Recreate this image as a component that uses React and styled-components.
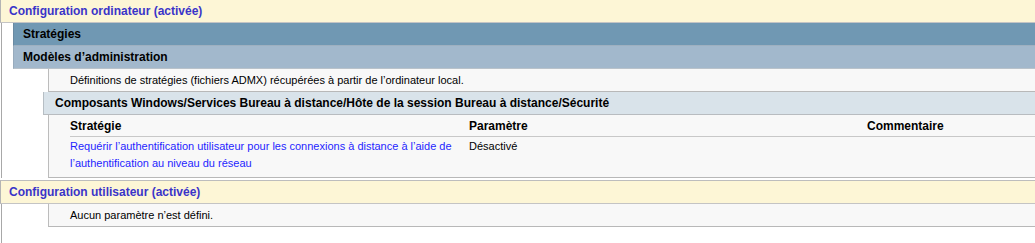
import React from 'react';
import styled, { createGlobalStyle } from 'styled-components';

const GlobalStyle = createGlobalStyle`
  html, body {
    margin: 0;
    padding: 0;
    background: #ffffff;
  }
  body {
    font-family: "Liberation Sans", Arial, sans-serif;
    font-size: 11px;
    color: #000000;
  }
`;

const COLUMNS = ['Stratégie', 'Paramètre', 'Commentaire'];

const POLICIES = [
  {
    name: 'Requérir l’authentification utilisateur pour les connexions à distance à l’aide de l’authentification au niveau du réseau',
    setting: 'Désactivé',
    comment: '',
  },
];

function Report() {
  return (
    <St.Page>
      <St.Section>
        <St.SectionHeader>Configuration ordinateur (activée)</St.SectionHeader>
        <St.SectionBody>
          <St.Band $tone="dark">Stratégies</St.Band>
          <St.Band $tone="light">Modèles d’administration</St.Band>
          <St.Note>Définitions de stratégies (fichiers ADMX) récupérées à partir de l’ordinateur local.</St.Note>
          <St.Category>
            Composants Windows/Services Bureau à distance/Hôte de la session Bureau à distance/Sécurité
          </St.Category>
          <St.Table>
            <St.HeadRow>
              {COLUMNS.map((col) => (
                <St.HeadCell key={col}>{col}</St.HeadCell>
              ))}
            </St.HeadRow>
            {POLICIES.map((p) => (
              <St.Row key={p.name}>
                <St.Cell>
                  <St.Link href="#">{p.name}</St.Link>
                </St.Cell>
                <St.Cell>{p.setting}</St.Cell>
                <St.Cell>{p.comment}</St.Cell>
              </St.Row>
            ))}
          </St.Table>
        </St.SectionBody>
      </St.Section>

      <St.Section $spaced>
        <St.SectionHeader $bordered>Configuration utilisateur (activée)</St.SectionHeader>
        <St.SectionBody>
          <St.Note>Aucun paramètre n’est défini.</St.Note>
          <St.Filler />
        </St.SectionBody>
      </St.Section>
    </St.Page>
  );
}

export default function App() {
  return (
    <>
      <GlobalStyle />
      <Report />
    </>
  );
}

const St = {
  Page: styled.div`
    width: 100%;
    display: flex;
    flex-direction: column;
    overflow: hidden;
  `,

  Section: styled.section`
    display: flex;
    flex-direction: column;
    margin-top: ${({ $spaced }) => ($spaced ? '2px' : '0')};
  `,

  SectionHeader: styled.div`
    height: 22px;
    line-height: 22px;
    padding-left: 8px;
    background: #fdf6d6;
    border-left: 1px solid #b4b4b4;
    border-top: ${({ $bordered }) => ($bordered ? '1px solid #bdbdbd' : 'none')};
    border-bottom: 1px solid #c4c4c4;
    color: #3a34c9;
    font-weight: bold;
    font-size: 12px;
  `,

  SectionBody: styled.div`
    display: flex;
    flex-direction: column;
    margin-left: 1px;
    padding-left: 11px;
    border-left: 1px solid #a8a8a8;
  `,

  Band: styled.div`
    height: 22px;
    line-height: 22px;
    padding-left: 9px;
    border-left: 1px solid ${({ $tone }) => ($tone === 'dark' ? '#6a8aa2' : '#98abbd')};
    border-bottom: 1px solid ${({ $tone }) => ($tone === 'dark' ? '#9eb0c0' : '#b9c2ca')};
    background: ${({ $tone }) => ($tone === 'dark' ? '#7098b3' : '#a2b8cc')};
    font-weight: bold;
    font-size: 12px;
  `,

  Note: styled.div`
    margin-left: 35px;
    height: 22px;
    line-height: 22px;
    padding-left: 21px;
    background: #f8f8f8;
    border-left: 1px solid #bcbcbc;
    border-bottom: 1px solid #b8b8b8;
  `,

  Category: styled.div`
    margin-left: 30px;
    height: 22px;
    line-height: 22px;
    padding-left: 11px;
    background: #d9e3ea;
    border-left: 1px solid #b6bec4;
    border-bottom: 1px solid #b8bcc0;
    font-weight: bold;
    font-size: 12px;
  `,

  Table: styled.div`
    margin-left: 35px;
    padding-left: 21px;
    background: #f8f8f8;
    border-left: 1px solid #bcbcbc;
    border-bottom: 1px solid #b8b8b8;
    display: flex;
    flex-direction: column;
  `,

  HeadRow: styled.div`
    display: grid;
    grid-template-columns: 399px 398px 1fr;
    height: 21px;
    border-bottom: 1px solid #c8c8c8;
  `,

  HeadCell: styled.div`
    line-height: 22px;
    font-weight: bold;
    font-size: 12px;
  `,

  Row: styled.div`
    display: grid;
    grid-template-columns: 399px 398px 1fr;
    padding: 1px 0 5px;
  `,

  Cell: styled.div`
    line-height: 17px;
    padding-right: 8px;
  `,

  Link: styled.a`
    color: #1f1fff;
    text-decoration: none;
  `,

  Filler: styled.div`
    height: 16px;
  `,
};
